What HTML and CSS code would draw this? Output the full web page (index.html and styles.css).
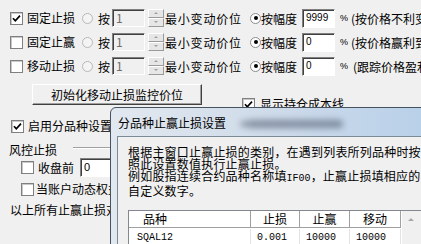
FILE: index.html
```html
<!DOCTYPE html>
<html lang="zh-CN">
<head>
  <meta charset="UTF-8">
  <title>止赢止损设置</title>
  <link rel="stylesheet" href="styles.css">
</head>
<body>
<div class="screen">

  <div class="main">
    <div class="row">
      <span class="chk"><svg viewBox="0 0 11 11"><path d="M2 5.2 L4.3 7.8 L9 2.6"/></svg></span>
      <span class="lbl">固定止损</span>
      <span class="radio"></span>
      <span class="an">按</span>
      <span class="txt dis">1</span>
      <span class="spin"><i></i><i class="dn"></i></span>
      <span class="unit">最小变动价位</span>
      <span class="radio on"></span>
      <span class="an2">按幅度</span>
      <span class="txt val">9999</span>
      <span class="pct">%</span>
      <span class="note">(按价格不利变动</span>
    </div>
    <div class="row">
      <span class="chk"></span>
      <span class="lbl">固定止赢</span>
      <span class="radio"></span>
      <span class="an">按</span>
      <span class="txt dis">1</span>
      <span class="spin"><i></i><i class="dn"></i></span>
      <span class="unit">最小变动价位</span>
      <span class="radio on"></span>
      <span class="an2">按幅度</span>
      <span class="txt val">0</span>
      <span class="pct">%</span>
      <span class="note">(按价格赢利到</span>
    </div>
    <div class="row">
      <span class="chk"></span>
      <span class="lbl">移动止损</span>
      <span class="radio"></span>
      <span class="an">按</span>
      <span class="txt dis">1</span>
      <span class="spin"><i></i><i class="dn"></i></span>
      <span class="unit">最小变动价位</span>
      <span class="radio on"></span>
      <span class="an2">按幅度</span>
      <span class="txt val">0</span>
      <span class="pct">%</span>
      <span class="note note3">(跟踪价格盈利</span>
    </div>

    <div class="row-btn">
      <button class="btn">初始化移动止损监控价位</button>
      <span class="chk cost"><svg viewBox="0 0 11 11"><path d="M2 5.2 L4.3 7.8 L9 2.6"/></svg></span>
      <span class="cost-lbl">显示持仓成本线</span>
    </div>

    <div class="row row-split">
      <span class="chk"><svg viewBox="0 0 11 11"><path d="M2 5.2 L4.3 7.8 L9 2.6"/></svg></span>
      <span class="lbl">启用分品种设置</span>
    </div>

    <div class="group">
      <span>风控止损</span>
      <span class="etch"></span>
    </div>
    <div class="row row-close">
      <span class="chk"></span>
      <span class="lbl">收盘前</span>
      <span class="txt val wide">0</span>
    </div>
    <div class="row row-equity">
      <span class="chk"></span>
      <span class="lbl">当账户动态权益</span>
    </div>
    <div class="row row-all">
      <span>以上所有止赢止损对</span>
    </div>
  </div>

  <div class="dlg">
    <div class="dlg-title">
      <span>分品种止赢止损设置</span>
      <span class="blur"></span>
    </div>
    <div class="dlg-client">
      <p class="hint">根据主窗口止赢止损的类别，在遇到列表所列品种时按<br>照此设置数值执行止赢止损。<br>例如股指连续合约品种名称填<span class="mono">IF00</span>，止赢止损填相应的<br>自定义数字。</p>
      <div class="list">
        <div class="cols">
          <div class="lv-head">
            <span class="c1">品种</span>
            <span class="c2">止损</span>
            <span class="c3">止赢</span>
            <span class="c4">移动</span>
          </div>
          <div class="lv-row">
            <span class="c1 mono">SQAL12</span>
            <span class="c2 mono">0.001</span>
            <span class="c3 mono">10000</span>
            <span class="c4 mono">10000</span>
          </div>
        </div>
        <div class="vscroll"><span class="up"></span></div>
      </div>
    </div>
  </div>

</div>
</body>
</html>
```

FILE: styles.css
```css
html, body {
  margin: 0;
  padding: 0;
  overflow: hidden;
}
body {
  background: #f0f0f0;
  color: #000;
  font-family: "Noto Sans CJK SC", "Liberation Sans", sans-serif;
  font-size: 12px;
}
.screen {
  position: relative;
  width: 421px;
  height: 244px;
  overflow: hidden;
}
.main {
  padding-top: 6px;
}
.row {
  display: flex;
  align-items: center;
  height: 24px;
  white-space: nowrap;
  overflow: hidden;
}
.row > span {
  flex: none;
}
.chk {
  box-sizing: border-box;
  width: 13px;
  height: 13px;
  margin-left: 10px;
  background: #fff;
  border: 1px solid #808080;
  box-shadow: inset 1px 1px 0 #c8c8c8;
  display: flex;
  align-items: center;
  justify-content: center;
}
.chk svg {
  width: 11px;
  height: 11px;
}
.chk path {
  fill: none;
  stroke: #000;
  stroke-width: 1.7;
}
.lbl {
  margin-left: 4px;
  width: 48px;
  line-height: 14px;
}
.radio {
  box-sizing: border-box;
  width: 11px;
  height: 11px;
  margin-left: 7px;
  border-radius: 50%;
  border: 1px solid #b8b8b8;
  background: #f4f4f4;
  position: relative;
}
.radio.on {
  margin-left: 7px;
  border-color: #8c8c8c;
  background: #fff;
}
.radio.on::after {
  content: "";
  position: absolute;
  left: 2.5px;
  top: 2.5px;
  width: 4px;
  height: 4px;
  border-radius: 50%;
  background: #000;
}
.an {
  margin-left: 5px;
  width: 12px;
}
.txt {
  box-sizing: border-box;
  width: 33px;
  height: 18px;
  margin-left: 2px;
  border-style: solid;
  border-width: 1px;
  border-color: #808080 #fff #fff #808080;
  box-shadow: inset 1px 1px 0 #404040;
  padding-left: 3px;
  line-height: 15px;
  overflow: hidden;
}
.txt.dis {
  background: #f0f0f0;
  color: #6d6d6d;
}
.txt.val {
  background: #fff;
  width: 33px;
  height: 19px;
  margin-left: 5px;
  font-family: "Liberation Sans", sans-serif;
  font-size: 10px;
  line-height: 16px;
}
.spin {
  display: flex;
  flex-direction: column;
  width: 16px;
  height: 18px;
  margin-left: 3px;
}
.spin i {
  box-sizing: border-box;
  flex: 1;
  background: #e6e6e6;
  border: 1px solid;
  border-color: #fff #9a9a9a #9a9a9a #fff;
  position: relative;
}
.spin i::after {
  content: "";
  position: absolute;
  left: 5px;
  top: 2px;
  border-left: 2px solid transparent;
  border-right: 2px solid transparent;
  border-bottom: 2px solid #a0a0a0;
}
.spin i.dn::after {
  border-bottom: 0;
  border-top: 2px solid #a0a0a0;
}
.unit {
  width: 78px;
  margin-left: 1px;
  letter-spacing: 0.8px;
}
.an2 {
  margin-left: 0;
  width: 36px;
}
.pct {
  margin-left: 5px;
  font-size: 9px;
  font-family: "Liberation Sans", sans-serif;
}
.note {
  margin-left: 3px;
}
.note3 {
  margin-left: 5px;
}

.row-btn {
  display: flex;
  align-items: flex-start;
  padding-top: 6px;
  white-space: nowrap;
}
.btn {
  box-sizing: border-box;
  width: 170px;
  height: 21px;
  margin: 0 0 0 32px;
  padding: 0;
  background: #f0f0f0;
  border: 1px solid;
  border-color: #fff #404040 #404040 #fff;
  box-shadow: inset -1px -1px 0 #a0a0a0;
  font-family: inherit;
  font-size: 12px;
  line-height: 18px;
}
.chk.cost {
  margin-left: 40px;
  margin-top: 14px;
}
.cost-lbl {
  margin-left: 5px;
  margin-top: 11px;
}

.row-split {
  margin-top: 2px;
}
.row-split .chk {
  margin-left: 11px;
}
.row-split .lbl {
  width: auto;
}

.group {
  display: flex;
  align-items: center;
  height: 16px;
  margin-top: 3px;
  padding-left: 9px;
  white-space: nowrap;
}
.etch {
  flex: 1;
  margin-left: 16px;
  margin-top: -3px;
  border-top: 1px solid #a0a0a0;
  border-bottom: 1px solid #fff;
}
.row-close {
  height: 21px;
}
.row-close .chk,
.row-equity .chk {
  margin-left: 21px;
}
.row-close .lbl {
  width: 36px;
}
.txt.wide {
  width: 40px;
  margin-left: 6px;
  font-size: 11px;
}
.row-equity {
  height: 22px;
}
.row-equity .lbl {
  width: auto;
  margin-left: 2px;
}
.row-all {
  height: 18px;
  padding-left: 10px;
}

/* dialog window */
.dlg {
  position: absolute;
  left: 110px;
  top: 107px;
  width: 330px;
  height: 160px;
  border: 1px solid #46525e;
  border-radius: 6px 6px 0 0;
  background: linear-gradient(to right, #e2e8ef 0%, #d0dcea 45%, #b6cfe9 100%);
}
.dlg-title {
  position: relative;
  height: 28px;
  padding-left: 7px;
  line-height: 30px;
  white-space: nowrap;
}
.blur {
  position: absolute;
  left: 136px;
  top: 12px;
  width: 96px;
  height: 8px;
  border-radius: 4px;
  background: rgba(70, 80, 100, 0.55);
  filter: blur(3px);
}
.blur::before {
  content: "";
  position: absolute;
  left: -6px;
  top: 1px;
  width: 6px;
  height: 6px;
  border-radius: 50%;
  background: rgba(70, 80, 100, 0.6);
}
.dlg-client {
  margin-left: 6px;
  height: 140px;
  background: #f0f0f0;
  border-top: 1px solid #7d8a97;
  border-left: 1px solid #7d8a97;
  padding: 9px 0 0 10px;
}
.hint {
  margin: 0;
  font-size: 12px;
  line-height: 12px;
  letter-spacing: 0.2px;
  white-space: nowrap;
}
.mono {
  font-family: "Liberation Mono", monospace;
  font-size: 10px;
  letter-spacing: 0;
}
.list {
  display: flex;
  width: 300px;
  height: 60px;
  margin-top: 13px;
  background: #fff;
  border: 1px solid #828790;
}
.cols {
  width: 272px;
}
.lv-head,
.lv-row {
  display: flex;
  height: 16px;
  line-height: 16px;
  white-space: nowrap;
}
.lv-head {
  border-bottom: 1px solid #a0a0a0;
}
.lv-row {
  margin-top: 1px;
  height: 17px;
  line-height: 17px;
  border-bottom: 1px solid #e3e3e3;
}
.lv-head span,
.lv-row span {
  box-sizing: border-box;
  border-right: 1px solid #a0a0a0;
}
.lv-row span {
  border-right-color: #e3e3e3;
}
.c1 { width: 122px; padding-left: 14px; }
.c2 { width: 49px; }
.c3 { width: 50px; }
.c4 { width: 51px; }
.lv-head .c2,
.lv-head .c3,
.lv-head .c4 {
  text-align: center;
}
.lv-row .c1 { padding-left: 8px; }
.lv-row .c2,
.lv-row .c3,
.lv-row .c4 { padding-left: 6px; }
.vscroll {
  width: 19px;
  margin-left: 1px;
  background: #f0f0f0;
}
.up {
  display: block;
  height: 17px;
  position: relative;
}
.up::after {
  content: "";
  position: absolute;
  left: 6px;
  top: 7px;
  border-left: 3px solid transparent;
  border-right: 3px solid transparent;
  border-bottom: 3px solid #a8a8a8;
}
```
